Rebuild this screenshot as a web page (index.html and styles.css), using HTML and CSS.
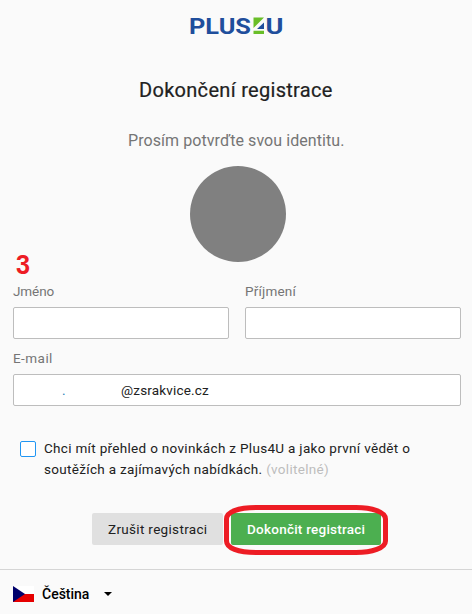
FILE: index.html
```html
<!DOCTYPE html>
<html lang="cs">
<head>
<meta charset="utf-8">
<title>Dokončení registrace</title>
<link rel="stylesheet" href="styles.css">
</head>
<body>
<main class="page">
  <header class="brand">
    <svg width="106" height="32" viewBox="-6 -6 106 32" role="img" aria-label="Plus4U">
      <text class="brand-text" x="-1" y="17.500" textLength="62" lengthAdjust="spacingAndGlyphs">PLUS</text>
      <path fill="#69be28" d="M63.500 1.500h10.500L63.500 12zM63.500 14.800h10.500v3.200H63.500z"/>
      <path fill="#1f4e9c" d="M74 6.500v6.500h-7z"/>
      <text class="brand-text" x="75.500" y="17.500" textLength="18" lengthAdjust="spacingAndGlyphs">U</text>
    </svg>
  </header>
  <h1 class="title">Dokončení registrace</h1>
  <p class="lead">Prosím potvrďte svou identitu.</p>
  <div class="avatar"></div>
  <form class="form">
    <div class="step">3</div>
    <div class="row">
      <div class="field"><span class="label label-first">Jméno</span><div class="input"></div></div>
      <div class="field"><span class="label label-last">Příjmení</span><div class="input"></div></div>
    </div>
    <div class="field field-mail"><span class="label label-mail">E-mail</span><div class="input"><span class="dot">.</span><span class="domain">@zsrakvice.cz</span></div></div>
    <div class="consent">
      <span class="checkbox"></span>
      <div class="consent-text">Chci mít přehled o novinkách z Plus4U a jako první vědět o<br>soutěžích a zajímavých nabídkách. <span class="optional">(volitelné)</span></div>
    </div>
    <div class="actions">
      <div class="btn cancel">Zrušit registraci</div>
      <div class="btn submit"><span>Dokončit registraci</span>
        <svg class="ring" width="164" height="50" viewBox="0 0 164 50"><path d="M32 2.500H132C148 2.500 161.500 7 161.500 14V36C161.500 43 148 47.500 132 47.500H32C14 47.500 2.500 43 2.500 36V14C2.500 7 14 2.500 32 2.500Z"/></svg>
      </div>
    </div>
  </form>
  <footer class="footer">
    <svg class="flag" width="21" height="16" viewBox="0 0 21 16"><path fill="#fff" d="M0 0h21v8H0z"/><path fill="#e60000" d="M0 8h21v8H0z"/><path fill="#00006b" d="M0 0l12 8-12 8z"/></svg>
    <span class="language">Čeština</span>
    <svg class="caret" width="8" height="4" viewBox="0 0 8 4"><path d="M0 0h8L4 4z"/></svg>
  </footer>
</main>
</body>
</html>
```

FILE: styles.css
```css
* { box-sizing: border-box; }
body { margin: 0; background: #fafafa; color: #212121; font-family: Roboto, "Noto Sans", sans-serif; }
.page { height: 614px; display: flex; flex-direction: column; overflow: hidden; }
.brand { height: 32px; margin: 10px 0 0 184px; }
.brand svg { display: block; overflow: visible; }
.brand-text { font: 700 22.500px Roboto, sans-serif; fill: #1f4e9c; }
.title { margin: 33px 0 0 139px; font-size: 20px; line-height: 30px; font-weight: 400; letter-spacing: .3px; -webkit-text-stroke: .2px currentColor; white-space: nowrap; }
.lead { margin: 24px 0 0 128px; font-size: 16px; line-height: 24px; color: #757575; letter-spacing: .07px; white-space: nowrap; }
.avatar { width: 96px; height: 96px; margin: 13px 0 0 190px; border-radius: 50%; background: #808080; flex: none; }
.form { padding: 0 11px 0 13px; }
.step { width: 16px; height: 20px; margin: -10px 0 0 3px; font: 700 28px/25px "Liberation Sans", sans-serif; color: #ed1c24; transform: scaleX(.9); transform-origin: left; }
.row { display: grid; grid-template-columns: 216px 216px; gap: 16px; margin-top: 9px; }
.label { display: block; width: max-content; height: 26px; font-size: 13.500px; line-height: 21px; color: #757575; letter-spacing: .2px; }
.label-first { letter-spacing: -.1px; }
.label-mail { letter-spacing: .45px; }
.input { height: 32px; border: 1px solid #bdbdbd; border-radius: 2px; background: #fff; font-size: 13.500px; line-height: 31px; display: flex; }
.field-mail { margin-top: 9px; }
.dot { width: 59px; margin-left: 48px; color: #2b7fb8; }
.domain { letter-spacing: .17px; }
.consent { display: flex; margin-top: 32px; padding-left: 7px; }
.checkbox { width: 16px; height: 16px; margin: 3px 8px 0 0; border: 1px solid #2196f3; border-radius: 2px; background: #fff; flex: none; }
.consent-text { font-size: 13.500px; line-height: 21px; letter-spacing: .31px; white-space: nowrap; }
.optional { color: #bdbdbd; }
.actions { display: flex; gap: 8px; margin: 33px 0 0 79px; }
.btn { height: 32px; border-radius: 2px; font-size: 13.500px; line-height: 33px; white-space: nowrap; letter-spacing: .32px; padding-left: 16px; }
.cancel { width: 131px; background: #e0e0e0; }
.submit { position: relative; width: 150px; background: #4caf50; color: #fff; font-weight: 500; letter-spacing: .24px; }
.ring { position: absolute; left: -7px; top: -8px; fill: none; stroke: #ed1c24; stroke-width: 5; }
.footer { margin-top: auto; height: 45px; padding: 4px 0 0 13px; display: flex; align-items: center; border-top: 1px solid #d5d5d5; flex: none; }
.language { margin: 0 15px 0 8px; font-size: 14px; line-height: 20px; color: #000; font-weight: 500; }
```
